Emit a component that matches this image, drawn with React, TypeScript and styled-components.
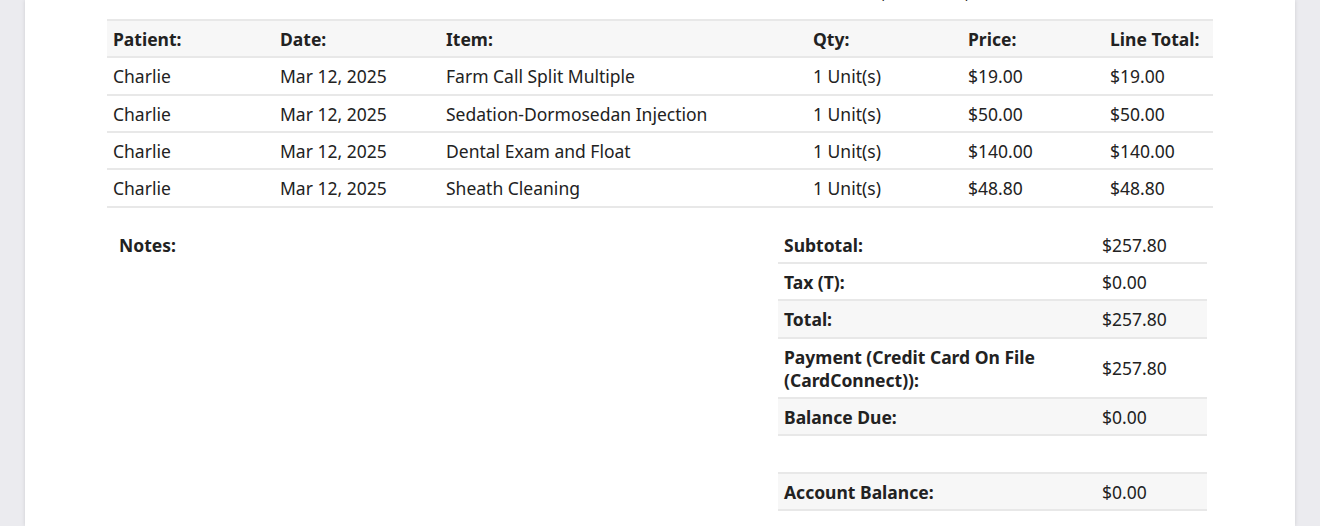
import React from "react";
import styled, { createGlobalStyle } from "styled-components";

const GlobalStyle = createGlobalStyle`
  html, body {
    margin: 0;
    padding: 0;
    background: #ebebef;
    font-family: "Noto Sans", "Open Sans", sans-serif;
    color: #222;
    overflow: hidden;
  }
  *, *::before, *::after {
    box-sizing: border-box;
  }
`;

const Sheet = styled.div`
  margin: 0 25px;
  min-height: 526px;
  background: #fff;
  box-shadow: 0 0 4px rgba(0, 0, 0, 0.12);
  padding: 0 82px;
  overflow: hidden;
`;

const AddressLine = styled.div`
  margin-top: -20px;
  margin-bottom: 15px;
  padding-left: 724px;
  font-size: 17.5px;
  line-height: 24px;
  white-space: nowrap;
`;

const ItemsTable = styled.table`
  width: 1106px;
  border-collapse: collapse;
  table-layout: fixed;
  font-size: 17.5px;
`;

const HeadRow = styled.tr`
  background: #f7f7f7;
  border-top: 2px solid #e8e8e8;
  border-bottom: 2px solid #e8e8e8;
`;

const Row = styled.tr<{ $shaded?: boolean }>`
  background: ${(p) => (p.$shaded ? "#f7f7f7" : "#fff")};
  border-bottom: 2px solid #e8e8e8;
`;

const Th = styled.th<{ $w: number }>`
  width: ${(p) => p.$w}px;
  text-align: left;
  font-weight: 700;
  padding: 7px 6px 5px;
  line-height: 1.333;
`;

const Td = styled.td`
  padding: 7px 6px 5px;
  line-height: 1.333;
  font-weight: 400;
`;

const Bottom = styled.div`
  display: flex;
  justify-content: space-between;
  align-items: flex-start;
  margin-top: 19px;
  padding-right: 6px;
`;

const Notes = styled.div`
  padding: 7px 12px 5px;
  font-size: 17.5px;
  font-weight: 700;
  line-height: 1.333;
`;

const SummaryTable = styled.table`
  width: 429px;
  border-collapse: collapse;
  table-layout: fixed;
  font-size: 17.5px;
`;

const Label = styled.td`
  width: 318px;
  padding: 7px 6px 5px;
  line-height: 1.333;
  font-weight: 700;
  vertical-align: middle;
`;

const Value = styled.td`
  padding: 7px 6px 5px;
  line-height: 1.333;
  vertical-align: middle;
`;

const columns = [
  { title: "Patient:", w: 167 },
  { title: "Date:", w: 166 },
  { title: "Item:", w: 367 },
  { title: "Qty:", w: 155 },
  { title: "Price:", w: 142 },
  { title: "Line Total:", w: 109 },
];

const items = [
  ["Charlie", "Mar 12, 2025", "Farm Call Split Multiple", "1 Unit(s)", "$19.00", "$19.00"],
  ["Charlie", "Mar 12, 2025", "Sedation-Dormosedan Injection", "1 Unit(s)", "$50.00", "$50.00"],
  ["Charlie", "Mar 12, 2025", "Dental Exam and Float", "1 Unit(s)", "$140.00", "$140.00"],
  ["Charlie", "Mar 12, 2025", "Sheath Cleaning", "1 Unit(s)", "$48.80", "$48.80"],
];

const totals: { label: string; value: string; shaded?: boolean }[] = [
  { label: "Subtotal:", value: "$257.80" },
  { label: "Tax (T):", value: "$0.00" },
  { label: "Total:", value: "$257.80", shaded: true },
  { label: "Payment (Credit Card On File (CardConnect)):", value: "$257.80" },
  { label: "Balance Due:", value: "$0.00", shaded: true },
  { label: "", value: "" },
  { label: "Account Balance:", value: "$0.00", shaded: true },
];

export default function App() {
  return (
    <>
      <GlobalStyle />
      <Sheet>
        <AddressLine>Lot 14, Mill Cove, TX 7</AddressLine>
        <ItemsTable>
          <thead>
            <HeadRow>
              {columns.map((c) => (
                <Th key={c.title} $w={c.w}>
                  {c.title}
                </Th>
              ))}
            </HeadRow>
          </thead>
          <tbody>
            {items.map((row, i) => (
              <Row key={i}>
                {row.map((cell, j) => (
                  <Td key={j}>{cell}</Td>
                ))}
              </Row>
            ))}
          </tbody>
        </ItemsTable>
        <Bottom>
          <Notes>Notes:</Notes>
          <SummaryTable>
            <tbody>
              {totals.map((t, i) => (
                <Row key={i} $shaded={t.shaded}>
                  <Label>{t.label || "\u00a0"}</Label>
                  <Value>{t.value}</Value>
                </Row>
              ))}
            </tbody>
          </SummaryTable>
        </Bottom>
      </Sheet>
    </>
  );
}
